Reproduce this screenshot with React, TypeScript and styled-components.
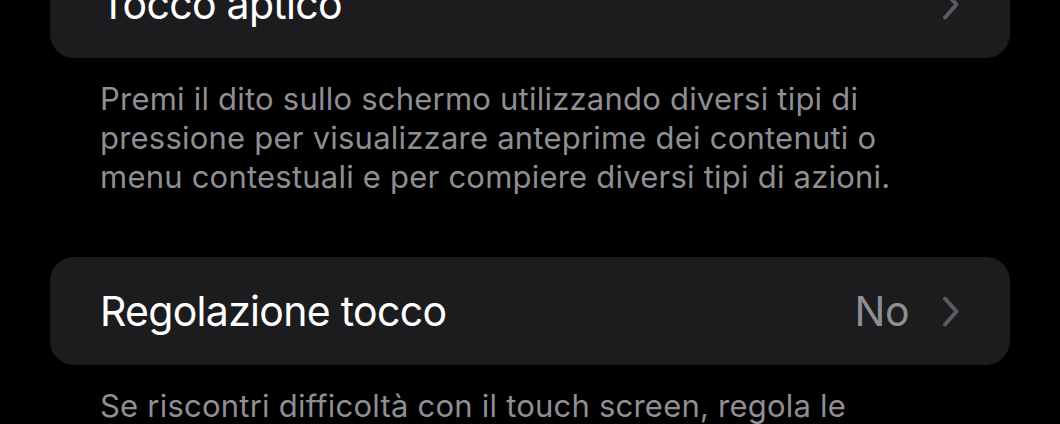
import React from "react";
import styled, { createGlobalStyle } from "styled-components";

const GlobalStyle = createGlobalStyle`
  html, body {
    margin: 0;
    padding: 0;
    background: #000;
    overflow: hidden;
  }
  body {
    font-family: Inter, "Noto Sans", "Liberation Sans", sans-serif;
    -webkit-font-smoothing: antialiased;
  }
`;

const Page = styled.div`
  width: 1060px;
  height: 424px;
  background: #000;
  overflow: hidden;
  padding: 0 50px;
  box-sizing: border-box;
`;

const List = styled.div`
  display: flex;
  flex-direction: column;
  margin-top: -50px;
`;

const Card = styled.div`
  background: #1c1c1e;
  border-radius: 24px;
  overflow: hidden;
`;

const Row = styled.div`
  height: 108px;
  display: flex;
  align-items: center;
  padding: 0 50px 0 50px;
  box-sizing: border-box;
`;

const Title = styled.span`
  flex: 1;
  color: #fff;
  font-size: 41px;
  letter-spacing: -0.7px;
  white-space: nowrap;
`;

const Value = styled.span`
  color: #8e8e93;
  font-size: 41px;
  letter-spacing: -0.5px;
  margin-right: 33px;
`;

const Footer = styled.p<{ $last?: boolean }>`
  margin: 0;
  padding: 21px 50px ${(p) => (p.$last ? "0" : "61px")} 50px;
  color: #8e8e93;
  font-size: 31px;
  line-height: 39px;
  letter-spacing: 0.22px;
  white-space: nowrap;
`;

const Chevron = () => (
  <svg width="18" height="31" viewBox="0 0 18 31" fill="none">
    <path
      d="M3 2.5 L14.5 15.5 L3 28.5"
      stroke="#5a5a5f"
      strokeWidth="4"
      strokeLinecap="round"
      strokeLinejoin="round"
    />
  </svg>
);

export default function App() {
  return (
    <>
      <GlobalStyle />
      <Page>
        <List>
          <Card>
            <Row>
              <Title>Tocco aptico</Title>
              <Chevron />
            </Row>
          </Card>
          <Footer>
            Premi il dito sullo schermo utilizzando diversi tipi di
            <br />
            pressione per visualizzare anteprime dei contenuti o
            <br />
            menu contestuali e per compiere diversi tipi di azioni.
          </Footer>
          <Card>
            <Row>
              <Title>Regolazione tocco</Title>
              <Value>No</Value>
              <Chevron />
            </Row>
          </Card>
          <Footer $last>
            Se riscontri difficoltà con il touch screen, regola le
          </Footer>
        </List>
      </Page>
    </>
  );
}
